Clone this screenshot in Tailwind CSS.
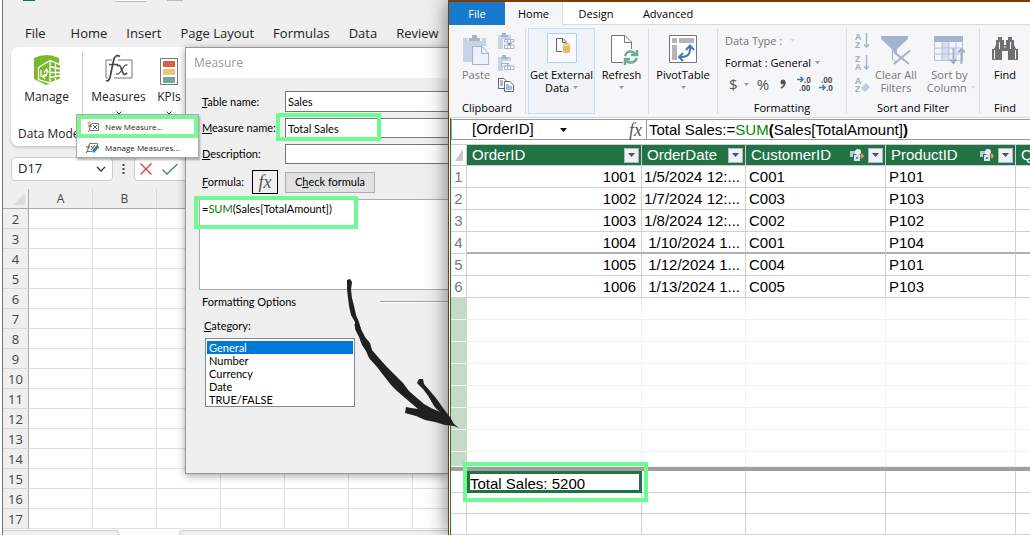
<!DOCTYPE html>
<html lang="en">
<head>
    <meta charset="UTF-8">
    <meta name="viewport" content="width=device-width, initial-scale=1.0">
    <title>Measure - Total Sales</title>
    <script src="https://cdn.jsdelivr.net/npm/@tailwindcss/browser@4"></script>
</head>
<body class="bg-white">
<div class="relative flex h-screen overflow-hidden font-['Open_Sans',sans-serif] text-[#222]">

    <!-- Excel workbook -->
    <section class="relative ml-0.5 flex w-[446px] shrink-0 flex-col overflow-hidden border-l border-[#777] bg-[#efefef]">
        <div class="flex h-6 shrink-0 items-start pl-5">
            <span class="h-px w-3 bg-[#107c41]"></span>
            <span class="ml-20 h-0.5 w-8 rounded-b border-b border-[#bbb] bg-white"></span>
            <span class="ml-5 h-px w-4 bg-[#bbb]"></span>
        </div>

        <nav class="flex h-[23px] shrink-0 items-start gap-[19px] pl-[22px] text-[13px] leading-[18px] whitespace-nowrap">
            <a href="#" class="mr-1.5">File</a>
            <a href="#">Home</a>
            <a href="#">Insert</a>
            <a href="#">Page Layout</a>
            <a href="#">Formulas</a>
            <a href="#">Data</a>
            <a href="#">Review</a>
        </nav>

        <div class="ml-2 flex h-[99px] shrink-0 rounded-l-lg bg-white text-[12px] leading-4 shadow-[0_2px_3px_rgba(0,0,0,0.15)]">
            <div class="flex w-[71px] flex-col justify-between pt-2 pb-0.5">
                <button class="flex flex-col items-center gap-1">
                    <svg class="h-[30px] w-[30px]" viewBox="0 0 30 30">
                        <path d="M2 3Q14 -3 27 3V24L14 30 2 24Z" fill="#7ab82e"/>
                        <path d="M6 12L18 5 29 10V24L18 28 6 24Z" fill="#7ab82e"/>
                        <path d="M6.500 12.500L18 5.500 28.500 10V24L18 28 6.500 24.500ZM18 5.500V28M18 11.500L28.500 14M18 17.500H28.500M18 22.500L28.500 20.500M23.500 8V26M9 15V22" stroke="#fff" stroke-width="1.3" fill="none"/>
                        <path d="M11 21.500Q16 22 14.500 15M12 17.500L14.500 14 16.500 17.500M13 19L10.500 21.500 13 24" stroke="#fff" stroke-width="1.2" fill="none"/>
                    </svg>
                    <span>Manage</span>
                </button>
                <span class="pl-[7px] pb-0.5 whitespace-nowrap">Data Model</span>
            </div>
            <div class="mt-1 h-20 w-px bg-[#ccc]"></div>
            <button class="flex w-[71px] flex-col items-center pt-2">
                <svg class="h-[30px] w-7 overflow-visible" viewBox="0 0 28 30" fill="none">
                    <path d="M7 5H1V23H3M13 5H27V23H9" stroke="#777"/>
                    <path d="M15 1.500Q10 -1.500 8.500 6L5.500 20Q4.500 27 1 25.500M4 9.500H13" stroke="#444" stroke-width="1.700"/>
                    <path d="M12 11Q15 9 16 13L18 18Q19 21 22 18" stroke="#555" stroke-width="1.900"/><path d="M22.500 10Q20 9 17 14.500T11 19" stroke="#555" stroke-width="1.300"/>
                </svg>
                <span class="mt-1">Measures</span>
                <svg class="mt-1.5 h-1 w-1.5" viewBox="0 0 6 4"><path d="M.5 .5L3 3 5.500 .5" fill="none" stroke="#333"/></svg>
            </button>
            <button class="flex w-[30px] flex-col items-center pt-2">
                <svg class="h-[30px] w-[18px]" viewBox="0 0 18 30">
                    <path d="M.5 3.500H17.500V29.500H.5Z" fill="#fff" stroke="#777"/>
                    <path d="M3 6H15V12H3Z" fill="#d8603f"/><path d="M3 14H15V20H3Z" fill="#edc57a"/><path d="M3 22H15V28H3Z" fill="#74a598"/>
                </svg>
                <span class="mt-1">KPIs</span>
                <svg class="mt-1.5 h-1 w-1.5" viewBox="0 0 6 4"><path d="M.5 .5L3 3 5.500 .5" fill="none" stroke="#333"/></svg>
            </button>
        </div>

        <div class="mt-[11px] ml-2 flex h-6 shrink-0 items-stretch">
            <label class="flex w-[102px] items-center rounded border border-[#ccc] bg-white pr-1.5 pl-1.5">
                <input type="text" value="D17" aria-label="Name box" class="w-full min-w-0 bg-transparent text-[13px] outline-none">
                <svg class="h-1.5 w-2.5 shrink-0" viewBox="0 0 10 6"><path d="M1 1L5 5 9 1" fill="none" stroke="#333" stroke-width="1.300"/></svg>
            </label>
            <svg class="mx-[9px] h-6 w-[3px]" viewBox="0 0 3 24"><path d="M.5 7h2v2h-2zM.5 11h2v2h-2zM.5 15h2v2h-2z" fill="#444"/></svg>
            <div class="flex flex-1 items-center gap-2.5 rounded-l border border-[#ccc] bg-white pl-[5px]">
                <button aria-label="Cancel"><svg class="h-3 w-3" viewBox="0 0 12 12"><path d="M.5 .5L11.500 11.500M11.500 .5L.5 11.500" stroke="#e0383e" stroke-width="1.200"/></svg></button>
                <button aria-label="Enter"><svg class="h-3 w-4" viewBox="0 0 16 12"><path d="M.5 6.500L5 11 15.500 1" fill="none" stroke="#2f9a4c" stroke-width="1.300"/></svg></button>
            </div>
        </div>

        <table class="mt-2 w-full shrink-0 table-fixed border-separate border-spacing-0 text-[13px] leading-[18px] text-[#444]">
            <colgroup><col class="w-[26px]"><col class="w-16"><col class="w-16"><col class="w-16"><col class="w-16"><col class="w-16"><col class="w-16"><col></colgroup>
            <thead>
                <tr class="h-5">
                    <td class="border-r border-b border-[#aaa] p-0"><svg class="ml-2.5 h-3 w-3" viewBox="0 0 12 12"><path d="M12 0V12H0Z" fill="#dcdcdc"/></svg></td>
                    <th class="border-r border-b border-r-[#d8d8d8] border-b-[#aaa] p-0 text-[12px] font-normal">A</th>
                    <th class="border-r border-b border-r-[#d8d8d8] border-b-[#aaa] p-0 text-[12px] font-normal">B</th>
                    <th class="border-r border-b border-r-[#d8d8d8] border-b-[#aaa] p-0 text-[12px] font-normal"></th>
                    <th class="border-r border-b border-r-[#d8d8d8] border-b-[#aaa] p-0 text-[12px] font-normal"></th>
                    <th class="border-r border-b border-r-[#d8d8d8] border-b-[#aaa] p-0 text-[12px] font-normal"></th>
                    <th class="border-r border-b border-r-[#d8d8d8] border-b-[#aaa] p-0 text-[12px] font-normal"></th>
                    <th class="border-b border-[#aaa] p-0 text-[12px] font-normal"></th>
                </tr>
            </thead>
            <tbody id="sheetRows" class="bg-white"></tbody>
        </table>
        <div class="flex flex-1 justify-between bg-white pt-px">
            <span class="w-[116px] rounded-tr border-t border-r border-[#ccc] bg-[#efefef]"></span>
            <span class="w-[269px] rounded-tl border-t border-l border-[#ccc] bg-[#efefef]"></span>
        </div>

        <!-- Measure dialog -->
        <form class="absolute top-[47px] right-0 left-[182px] h-[427px] border border-r-0 border-[#999] bg-[#efefef] font-[Lato,sans-serif] text-[11px] leading-[14px] text-black shadow-[0_2px_8px_rgba(0,0,0,0.35)]">
            <h2 class="h-[30px] bg-white pl-2 font-['Open_Sans',sans-serif] text-[12px] leading-[30px] text-[#999]">Measure</h2>
            <div class="grid grid-cols-[83px_1fr] items-center gap-y-1.5 pt-[13px] pl-4">
                <label for="tableName"><u>T</u>able name:</label>
                <input id="tableName" type="text" value="Sales" class="h-[21px] border border-r-0 border-[#777] bg-white px-0.5">
                <label for="measureName"><u>M</u>easure name:</label>
                <input id="measureName" type="text" value="Total Sales" class="h-5 border border-r-0 border-[#777] bg-white px-0.5">
                <label for="description"><u>D</u>escription:</label>
                <input id="description" type="text" class="h-5 border border-r-0 border-[#777] bg-white px-0.5">
                <label for="formula"><u>F</u>ormula:</label>
                <div class="relative flex h-6 items-center">
                    <button type="button" class="absolute -left-[33px] h-6 w-[26px] border border-black font-['Liberation_Serif',serif] text-[18px] leading-5 text-[#555] italic">fx</button>
                    <button type="button" class="h-[21px] w-[90px] border border-[#adadad] bg-[#e1e1e1]">C<u>h</u>eck formula</button>
                </div>
            </div>
            <div class="relative mt-[5px] ml-[13px] h-[91px] border border-r-0 border-[#abadb3] bg-white">
                <div id="formula" contenteditable="true" role="textbox" aria-label="Formula" class="pt-0.5 pl-0.5">=<span class="text-[#008000]">SUM</span>(Sales[TotalAmount])</div>
            </div>
            <fieldset class="pl-4">
                <div class="mt-[5px] flex items-center">
                    <span class="w-[178px]">Formatting Options</span>
                    <span class="h-0.5 flex-1 border-t border-[#a0a0a0] bg-white"></span>
                </div>
                <label for="category" class="mt-2.5 ml-0.5 block"><u>C</u>ategory:</label>
                <select id="category" size="5" class="mt-[5px] ml-[3px] block h-[69px] w-[150px] overflow-hidden border border-[#828790] bg-white px-px py-0.5">
                    <option selected class="h-[13px] min-h-0 p-0 pl-0.5 leading-[13px] checked:bg-[linear-gradient(#0078d7,#0078d7)] checked:[-webkit-text-fill-color:white]">General</option>
                    <option class="h-[13px] min-h-0 p-0 pl-0.5 leading-[13px]">Number</option>
                    <option class="h-[13px] min-h-0 p-0 pl-0.5 leading-[13px]">Currency</option>
                    <option class="h-[13px] min-h-0 p-0 pl-0.5 leading-[13px]">Date</option>
                    <option class="h-[13px] min-h-0 p-0 pl-0.5 leading-[13px]">TRUE/FALSE</option>
                </select>
            </fieldset>
        </form>

        <!-- Measures drop-down -->
        <div class="absolute top-[114px] left-[73px] flex w-[123px] flex-col border border-[#aaa] bg-white text-[8px] leading-3 font-medium text-[#222] shadow-[1px_2px_2px_rgba(0,0,0,0.3)]">
            <button class="flex h-[23px] items-center gap-1.5 border-4 border-[#7cf797] pl-1.5">
                <svg class="h-3 w-3 shrink-0" viewBox="0 0 12 12" fill="none"><path d="M5 2.500H11.500V9.500H3" stroke="#777"/><path d="M5 3Q3 2 3 6T1 11M1 5H5M6 4L10 8M10 4L6 8" stroke="#555"/><circle cx="2" cy="2" r="1.700" fill="#edb872"/></svg>
                <span>New Measure...</span>
            </button>
            <button class="flex h-[19px] items-center gap-1.5 pl-2">
                <svg class="h-3 w-3.5 shrink-0" viewBox="0 0 14 12" fill="none"><path d="M5 1.500H12.500V5M2 9.500H7" stroke="#777"/><path d="M6 1Q4 1 3.500 5T1 11M1 5H5M6 4L9 8M10 3L6 8" stroke="#555"/><path d="M13 4L8 10" stroke="#4478b5" stroke-width="3"/></svg>
                <span>Manage Measures...</span>
            </button>
        </div>
    </section>

    <!-- Power Pivot window -->
    <section class="relative z-10 flex min-w-0 flex-1 flex-col border-t-2 border-l border-[#7a3e05] bg-white text-black shadow-[0_0_20px_rgba(0,0,0,0.55)]">
        <nav class="flex h-[23px] shrink-0 text-[11px] leading-6">
            <button class="w-14 bg-[#1979ca] text-white">File</button>
            <button class="w-[58px] border-r border-[#dadbdc] bg-[#f5f6f7]">Home</button>
            <button class="w-[66px] border-b border-[#dadbdc]">Design</button>
            <button class="w-[78px] border-b border-[#dadbdc]">Advanced</button>
            <span class="flex-1 border-b border-[#dadbdc]"></span>
        </nav>

        <div class="flex h-[93px] shrink-0 border-b border-[#d5d6d8] bg-[#f5f6f7] py-[3px] text-[11px] leading-[13px]">
            <div class="flex w-[77px] shrink-0 flex-col border-r border-[#dcdde0]">
                <div class="flex flex-1 gap-2 pl-[13px]">
                    <button class="flex flex-col items-center pt-[7px] text-[#777]">
                        <svg class="h-[30px] w-7" viewBox="0 0 28 30"><path d="M1 3H6V6H20V3H24V11H11V27H1Z" fill="#c7d3e6"/><path d="M7 3H10V0H15V3H18V6H7Z" fill="#a6b3cc"/><path d="M10.500 11.500H20L26.500 18V29.500H10.500Z" fill="#edf1f9" stroke="#a6b3cc"/><path d="M19.500 11.500V18.500H26.500" fill="none" stroke="#a6b3cc"/></svg>
                        <span class="mt-[3px]">Paste</span>
                    </button>
                    <div class="flex flex-col gap-1.5 pt-[5px]">
                        <button aria-label="Paste append"><svg class="block h-4 w-[17px]" viewBox="0 0 17 16"><path d="M0 2H3V4H10V2H13V6H5V16H0Z" fill="#c7d3e6"/><path d="M4 0H8V2H10V4H3V2H4Z" fill="#a6b3cc"/><path d="M6.500 6.500H16V9H6.500ZM6.500 12H16V15.500H6.500ZM9.500 6V9M12.500 6V9M9.500 12V15M12.500 12V15" fill="#fff" stroke="#a6b3cc"/><path d="M9 10h5l-2.500 3z" fill="#8294b5"/></svg></button>
                        <button aria-label="Paste replace"><svg class="block h-4 w-[17px]" viewBox="0 0 17 16"><path d="M0 2H3V4H10V2H13V6H5V16H0Z" fill="#c7d3e6"/><path d="M4 0H8V2H10V4H3V2H4Z" fill="#a6b3cc"/><path d="M3.500 8.500H11V11H3.500ZM6.500 11H16V14.500H6.500ZM9.500 8V14M12.500 11V14" fill="#fff" stroke="#a6b3cc"/></svg></button>
                        <button aria-label="Copy"><svg class="block h-4 w-4" viewBox="0 0 16 16"><path d="M.5 1.500H6L8.500 4V11.500H.5Z" fill="#fff" stroke="#666"/><path d="M6.500 4.500H12L15.500 8V14.500H6.500Z" fill="#fff" stroke="#666"/><path d="M2 4H5M2 6H5M2 8H5M8 8H11M8 10H14M8 12H14" stroke="#4478b5"/></svg></button>
                    </div>
                </div>
                <span class="text-center">Clipboard</span>
            </div>
            <button class="ml-0.5 flex w-[67px] shrink-0 flex-col items-center border border-[#c5dff5] bg-[#eff3f8] pt-1">
                <svg class="h-[30px] w-[30px]" viewBox="0 0 30 30"><path d="M.5 .5H29.500V29.500H.5Z" fill="#f9fafc" stroke="#a9d1f5"/><path d="M15 18.500H9.500V5.500H16L19.500 9" fill="none" stroke="#666"/><path d="M15.500 5.500V9.500H19.500" fill="none" stroke="#666"/><path d="M16 11Q19.500 8 23 11V19Q19.500 21.500 16 19Z" fill="#e9b866"/><path d="M16 11.500Q19.500 13.500 23 11.500" stroke="#fff" fill="none" stroke-width=".8"/></svg>
                <span class="mt-[5px] whitespace-nowrap">Get External</span>
                <span class="flex items-center gap-1">Data <svg class="h-[3px] w-[5px]" viewBox="0 0 5 3"><path d="M0 0H5L2.500 3Z" fill="#999"/></svg></span>
            </button>
            <button class="flex w-[53px] shrink-0 flex-col items-center pt-[7px]">
                <svg class="ml-1.5 h-[30px] w-7" viewBox="0 0 28 30"><path d="M.5 .5H14L20.500 7V27.500H.5Z" fill="#fff"/><path d="M12 27.500H.5V.5H14L20.500 7V14M13.500 .5V7.500H20.500" fill="none" stroke="#777"/><path d="M14 21Q16 15 22 17L24 19M26 15V20H20M26 23Q23 29 17 27L15 25M14 30V24H19" fill="none" stroke="#72ab94" stroke-width="2.500"/></svg>
                <span class="mt-[3px]">Refresh</span>
                <svg class="mt-[5px] h-[3px] w-[5px]" viewBox="0 0 5 3"><path d="M0 0H5L2.500 3Z" fill="#999"/></svg>
            </button>
            <button class="flex w-[70px] shrink-0 flex-col items-center border-x border-[#dcdde0] pt-[7px]">
                <svg class="h-[30px] w-7" viewBox="0 0 28 30"><path d="M.5 .5H27.500V27.500H.5Z" fill="#fff" stroke="#777"/><path d="M3 3H8V8H3ZM10 3H25V8H10ZM3 10H8V25H3Z" fill="#b5b5b5"/><path d="M11 22Q22 23 21 12M14 18L10 22 14 26M17 15L21 10.500 25 15" fill="none" stroke="#3e7ab8" stroke-width="2"/></svg>
                <span class="mt-[3px]">PivotTable</span>
                <svg class="mt-[5px] h-[3px] w-[5px]" viewBox="0 0 5 3"><path d="M0 0H5L2.500 3Z" fill="#999"/></svg>
            </button>
            <div class="flex w-[129px] shrink-0 flex-col border-r border-[#dcdde0]">
                <div class="flex flex-1 flex-col pt-1.5 pl-[7px]">
                    <button class="flex items-center gap-2 text-[#777]">Data Type : <svg class="h-[3px] w-[5px]" viewBox="0 0 5 3"><path d="M0 0H5L2.500 3Z" fill="#ddd"/></svg></button>
                    <button class="mt-[9px] flex items-center gap-1">Format : General <svg class="h-[3px] w-[5px]" viewBox="0 0 5 3"><path d="M0 0H5L2.500 3Z" fill="#999"/></svg></button>
                    <div class="mt-[7px] flex items-center text-[15px] leading-4 text-[#555]">
                        <button class="ml-1 flex w-[26px] items-center gap-1.5" aria-label="Currency">$ <svg class="h-[3px] w-[5px]" viewBox="0 0 5 3"><path d="M0 0H5L2.500 3Z" fill="#999"/></svg></button>
                        <button class="w-4" aria-label="Percent">%</button>
                        <button class="ml-1 w-4" aria-label="Thousands separator"><svg class="mx-auto h-2.5 w-1.5" viewBox="0 0 6 10"><circle cx="3" cy="3" r="2.500" fill="#555"/><path d="M5 3Q5 7 1 9" fill="none" stroke="#555" stroke-width="1.500"/></svg></button>
                        <button class="ml-1.5 w-[22px]" aria-label="Increase decimal"><svg class="h-4 w-4 overflow-visible" viewBox="0 0 16 16"><text x="7" y="7" font-family="Open Sans" font-size="8" font-weight="bold" fill="#555">.0</text><text x="2" y="15" font-family="Open Sans" font-size="8" font-weight="bold" fill="#555">.00</text><path d="M0 3.500H6M3.500 1L6 3.500 3.500 6" fill="none" stroke="#3e7ab8" stroke-width="1.500"/></svg></button>
                        <button class="w-4" aria-label="Decrease decimal"><svg class="h-4 w-4 overflow-visible" viewBox="0 0 16 16"><text x="2" y="7" font-family="Open Sans" font-size="8" font-weight="bold" fill="#555">.00</text><text x="7" y="15" font-family="Open Sans" font-size="8" font-weight="bold" fill="#555">.0</text><path d="M0 11.500H6M3.500 9L6 11.500 3.500 14" fill="none" stroke="#3e7ab8" stroke-width="1.500"/></svg></button>
                    </div>
                </div>
                <span class="text-center">Formatting</span>
            </div>
            <div class="flex w-[133px] shrink-0 flex-col border-r border-[#dcdde0]">
                <div class="flex flex-1 pl-2 text-[#777]">
                    <div class="flex flex-col gap-1.5 pt-[5px]">
                        <button aria-label="Sort A to Z"><svg class="block h-4 w-4 overflow-visible" viewBox="0 0 16 16"><text x="0" y="7" font-family="Open Sans" font-size="9" font-weight="bold" fill="#a6b3cc">A</text><text x="0" y="15" font-family="Open Sans" font-size="9" font-weight="bold" fill="#a6b3cc">Z</text><path d="M11.500 0V14M9 11.500L11.500 14 14 11.500" fill="none" stroke="#a6b3cc" stroke-width="1.500"/></svg></button>
                        <button aria-label="Sort Z to A"><svg class="block h-4 w-4 overflow-visible" viewBox="0 0 16 16"><text x="0" y="7" font-family="Open Sans" font-size="9" font-weight="bold" fill="#a6b3cc">Z</text><text x="0" y="15" font-family="Open Sans" font-size="9" font-weight="bold" fill="#a6b3cc">A</text><path d="M11.500 0V14M9 11.500L11.500 14 14 11.500" fill="none" stroke="#a6b3cc" stroke-width="1.500"/></svg></button>
                        <button aria-label="Clear sort"><svg class="block h-4 w-4 overflow-visible" viewBox="0 0 16 16"><text x="0" y="7" font-family="Open Sans" font-size="9" font-weight="bold" fill="#a6b3cc">A</text><text x="0" y="15" font-family="Open Sans" font-size="9" font-weight="bold" fill="#a6b3cc">Z</text><path d="M6 11L11 6 15 10 10 15Z" fill="#c0cadb"/></svg></button>
                    </div>
                    <button class="ml-1 flex flex-col items-center pt-2">
                        <svg class="h-[29px] w-[31px]" viewBox="0 0 31 29"><path d="M1 0H28V3L17 13V19L12 14V13L1 3Z" fill="#a6b3cc"/><path d="M3 3L12.500 13V23L16 26.500" fill="none" stroke="#a6b3cc"/><path d="M14 16L29 28M30 14.500L14 28" stroke="#a6b3cc" stroke-width="2.200"/></svg>
                        <span class="mt-[3px] whitespace-nowrap">Clear All</span><span>Filters</span>
                    </button>
                    <button class="ml-1.5 flex flex-col items-center pt-2">
                        <svg class="h-[29px] w-[31px]" viewBox="0 0 31 29"><path d="M.5 .5H28.500V24.500H.5Z" fill="#f2f5fa" stroke="#b5c1d6"/><path d="M8 6H15V24H8Z" fill="#d5deed"/><path d="M0 0H29V6H0Z" fill="#a6b3cc"/><path d="M1 12H28M1 18H28M8 6V24M15 6V24M22 6V24" stroke="#b5c1d6"/><path d="M19.500 12V27M16 23.500L19.500 27 22 23.500M27.500 28V13M24 16.500L27.500 13 31 16.500" fill="none" stroke="#a0aec9" stroke-width="2"/></svg>
                        <span class="mt-[3px] whitespace-nowrap">Sort by</span>
                        <span class="flex items-center gap-1 pl-1">Column <svg class="h-[3px] w-[5px]" viewBox="0 0 5 3"><path d="M0 0H5L2.500 3Z" fill="#ddd"/></svg></span>
                    </button>
                </div>
                <span class="text-center">Sort and Filter</span>
            </div>
            <div class="flex w-[50px] shrink-0 flex-col items-center">
                <button class="flex flex-1 flex-col items-center pt-[9px]">
                    <svg class="h-6 w-[26px]" viewBox="0 0 26 24"><path d="M6 0H10V3H12V8H14V3H16V0H20V3H22V8L24 12H26V23H16V14H10V23H0V12H2L4 8V3H6Z" fill="#707070"/><path d="M2.500 13V22M7.500 5V12M18.500 5V12M23.500 13V22M12 10H14" stroke="#f5f6f7"/></svg>
                    <span class="mt-[7px]">Find</span>
                </button>
                <span>Find</span>
            </div>
        </div>

        <div class="ml-px flex min-h-0 flex-1 flex-col border-l border-[#217346] font-['Liberation_Sans',sans-serif] text-[15px]">
            <div class="mt-px flex h-[21px] shrink-0 border border-r-0 border-[#999]">
                <label class="flex w-[195px] items-center border-r border-[#999] pr-1">
                    <input type="text" value="[OrderID]" aria-label="Selected column" class="ml-5 w-[86px] outline-none">
                    <svg class="ml-0.5 h-1 w-[7px]" viewBox="0 0 7 4"><path d="M0 0H7L3.500 4Z" fill="#000"/></svg>
                    <span class="ml-auto font-['Liberation_Serif',serif] text-[18px] leading-4 text-[#555] italic">fx</span>
                </label>
                <div contenteditable="true" role="textbox" aria-label="Formula bar" class="flex-1 pl-0.5 leading-5 whitespace-nowrap">Total Sales:=<span class="text-[#008a00]">SUM</span><b>(</b>Sales[TotalAmount]<b>)</b></div>
            </div>

            <table class="mt-1 w-full shrink-0 table-fixed border-separate border-spacing-0 border-t border-[#ccc] leading-5">
                <colgroup><col class="w-4"><col class="w-[175px]"><col class="w-[104px]"><col class="w-[140px]"><col class="w-[130px]"><col></colgroup>
                <thead>
                    <tr class="h-[21px] text-left text-white">
                        <td class="border-r border-b border-[#d0d0d0] p-0"><svg class="ml-1 h-3 w-2" viewBox="0 0 8 12"><path d="M8 0V12H0Z" fill="#c8c8c8"/></svg></td>
                        <th class="border-r border-b border-[#d0d0d0] bg-[#217346] p-0 font-normal"><div class="flex h-5 items-center pr-0.5 pl-[5px]"><span class="flex-1">OrderID</span><button aria-label="Filter OrderID" class="flex h-[15px] w-[15px] items-center justify-center border border-[#adb7c5] bg-[#eef1f6]"><svg class="h-1 w-[7px]" viewBox="0 0 7 4"><path d="M0 0H7L3.500 4Z" fill="#45516e"/></svg></button></div></th>
                        <th class="border-r border-b border-[#d0d0d0] bg-[#217346] p-0 font-normal"><div class="flex h-5 items-center pr-0.5 pl-[5px]"><span class="flex-1">OrderDate</span><button aria-label="Filter OrderDate" class="flex h-[15px] w-[15px] items-center justify-center border border-[#adb7c5] bg-[#eef1f6]"><svg class="h-1 w-[7px]" viewBox="0 0 7 4"><path d="M0 0H7L3.500 4Z" fill="#45516e"/></svg></button></div></th>
                        <th class="border-r border-b border-[#d0d0d0] bg-[#217346] p-0 font-normal"><div class="flex h-5 items-center pr-0.5 pl-[5px]"><span class="flex-1">CustomerID</span><svg class="mr-1 h-3 w-3.5" viewBox="0 0 14 12"><path d="M0 2H6V5H3V8H0Z" fill="#b9c9d8"/><path d="M4 6H10V12H4Z" fill="#d9e2ef"/><circle cx="8" cy="3" r="3" fill="#eef1f6"/><path d="M6 8H8V10H6Z" fill="#6b88b5"/><path d="M12 4L14 7 12 10 10 7Z" fill="#e0965c"/></svg><button aria-label="Filter CustomerID" class="flex h-[15px] w-[15px] items-center justify-center border border-[#adb7c5] bg-[#eef1f6]"><svg class="h-1 w-[7px]" viewBox="0 0 7 4"><path d="M0 0H7L3.500 4Z" fill="#45516e"/></svg></button></div></th>
                        <th class="border-r border-b border-[#d0d0d0] bg-[#217346] p-0 font-normal"><div class="flex h-5 items-center pr-0.5 pl-[5px]"><span class="flex-1">ProductID</span><svg class="mr-1 h-3 w-3.5" viewBox="0 0 14 12"><path d="M0 2H6V5H3V8H0Z" fill="#b9c9d8"/><path d="M4 6H10V12H4Z" fill="#d9e2ef"/><circle cx="8" cy="3" r="3" fill="#eef1f6"/><path d="M6 8H8V10H6Z" fill="#6b88b5"/><path d="M12 4L14 7 12 10 10 7Z" fill="#e0965c"/></svg><button aria-label="Filter ProductID" class="flex h-[15px] w-[15px] items-center justify-center border border-[#adb7c5] bg-[#eef1f6]"><svg class="h-1 w-[7px]" viewBox="0 0 7 4"><path d="M0 0H7L3.500 4Z" fill="#45516e"/></svg></button></div></th>
                        <th class="overflow-hidden border-b border-[#d0d0d0] bg-[#217346] p-0 pl-[5px] font-normal">Q</th>
                    </tr>
                </thead>
                <tbody id="dataRows"></tbody>
            </table>

            <div class="h-1 shrink-0 bg-[#a0a0a0]"></div>
            <table class="w-full shrink-0 table-fixed border-separate border-spacing-0 leading-4">
                <colgroup><col class="w-4"><col class="w-[175px]"><col class="w-[104px]"><col class="w-[140px]"><col class="w-[130px]"><col></colgroup>
                <tbody>
                    <tr class="h-[22px]"><td class="border-r border-b border-[#d0d0d0]"></td><td class="border-[3px] border-[#217346] p-0"><div class="relative h-4 leading-[19px]">Total Sales: 5200<span class="pointer-events-none absolute -top-3 -right-[9px] -bottom-3 -left-[7px] border-4 border-[#6dfc91]"></span></div></td><td class="border-r border-b border-[#d0d0d0]"></td><td class="border-r border-b border-[#d0d0d0]"></td><td class="border-r border-b border-[#d0d0d0]"></td><td class="border-b border-[#d0d0d0]"></td></tr>
                    <tr class="h-[21px]"><td class="border-r border-b border-[#d0d0d0]"></td><td class="border-r border-b border-[#d0d0d0]"></td><td class="border-r border-b border-[#d0d0d0]"></td><td class="border-r border-b border-[#d0d0d0]"></td><td class="border-r border-b border-[#d0d0d0]"></td><td class="border-b border-[#d0d0d0]"></td></tr>
                    <tr class="h-[21px]"><td class="border-r border-b border-[#d0d0d0]"></td><td class="border-r border-b border-[#d0d0d0]"></td><td class="border-r border-b border-[#d0d0d0]"></td><td class="border-r border-b border-[#d0d0d0]"></td><td class="border-r border-b border-[#d0d0d0]"></td><td class="border-b border-[#d0d0d0]"></td></tr>
                </tbody>
            </table>
        </div>
    </section>

    <!-- Highlights and arrow -->
    <div class="pointer-events-none absolute top-[113px] left-[276px] z-20 h-7 w-[105px] border-4 border-[#6dfc91]"></div>
    <div class="pointer-events-none absolute top-[196px] left-[194px] z-20 h-[33px] w-[164px] border-4 border-[#6dfc91]"></div>
    <svg class="pointer-events-none absolute top-[270px] left-[335px] z-20 h-[165px] w-[130px]" viewBox="0 0 130 165">
        <path d="M12 10L15 9 17 12 16 20 17 28 19 36 21 45 24 52 26 59 30 67 35 73 37 80 43 87 51 96 60 105 68 113 74 121 82 128 89 134 96 138 105 142 99 136 94 127 88 119 82 113 84 109 88 109 89 114 95 121 101 128 108 138 115 147 119 154 124 158 119 156 110 155 100 152 90 150 81 146 70 143 71 137 76 138 83 139 76 133 69 127 62 121 56 115 49 106 42 97 34 88 31 81 27 75 24 67 20 59 20 52 16 45 14 36 13 28 12 19Z" fill="#20201e"/>
        <path d="M20 54L25 59M28 69L33 80M33 74L36 85M48 101L55 110M67 121L76 129M84 141L100 149M95 126L104 140" fill="none" stroke="#20201e" stroke-width="3" stroke-dasharray="2 1 4 1"/>
    </svg>
</div>

<script>
    const sheetRows = document.getElementById('sheetRows');
    for (let n = 2; n <= 17; n++) {
        sheetRows.innerHTML += '<tr class="h-5"><th class="border-r border-b border-r-[#aaa] border-b-[#d8d8d8] bg-[#efefef] p-0 font-normal">' + n + '</th>' +
            '<td class="border-r border-b border-[#e0e0e0] p-0"></td>'.repeat(6) + '<td class="border-b border-[#e0e0e0] p-0"></td></tr>';
    }

    const orders = [
        ['1001', '1/5/2024 12:...', 'C001', 'P101'],
        ['1002', '1/7/2024 12:...', 'C003', 'P103'],
        ['1003', '1/8/2024 12:...', 'C002', 'P102'],
        ['1004', '1/10/2024 1...', 'C001', 'P104'],
        ['1005', '1/12/2024 1...', 'C004', 'P101'],
        ['1006', '1/13/2024 1...', 'C005', 'P103']
    ];
    const dataRows = document.getElementById('dataRows');
    let html = '';
    orders.forEach((order, i) => {
        // thicker rule under the fourth order
        const line = i === 3 ? 'border-b border-b-[#b0b0b0] shadow-[inset_0_-1px_0_#b0b0b0]' : 'border-b border-b-[#d0d0d0]';
        html += '<tr class="h-[22px]"><th class="border-r border-b border-[#d0d0d0] p-0 pt-px font-normal text-[#777]">' + (i + 1) + '</th>' +
            '<td class="border-r border-r-[#d0d0d0] p-0 pt-px pr-[5px] text-right ' + line + '">' + order[0] + '</td>' +
            '<td class="border-r border-r-[#d0d0d0] p-0 pt-px pr-[5px] text-right whitespace-nowrap ' + line + '">' + order[1] + '</td>' +
            '<td class="border-r border-r-[#d0d0d0] p-0 pt-px pl-[3px] ' + line + '">' + order[2] + '</td>' +
            '<td class="border-r border-r-[#d0d0d0] p-0 pt-px pl-[3px] ' + line + '">' + order[3] + '</td>' +
            '<td class="p-0 ' + line + '"></td></tr>';
    });
    for (let i = 0; i < 8; i++) {
        const last = i === 7;
        html += '<tr class="' + (last ? 'h-[15px]' : 'h-[22px]') + '"><td class="border-b border-[#f0f4f0] bg-[#c5dac9] p-0"></td>' +
            '<td class="border-r border-b border-[#f0f0f0] p-0"></td>'.repeat(4) + '<td class="border-b border-[#f0f0f0] p-0"></td></tr>';
    }
    dataRows.innerHTML = html;
</script>
</body>
</html>
